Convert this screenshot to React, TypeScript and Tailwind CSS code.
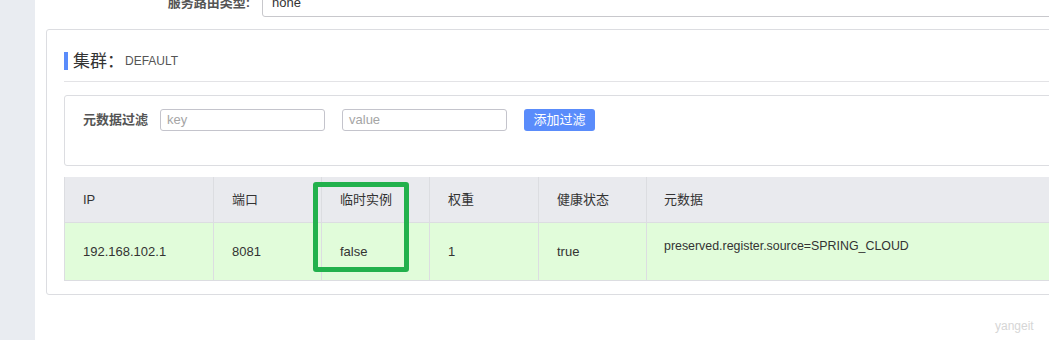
export default function App() {
  const cols = [
    { title: 'IP', value: '192.168.102.1', w: 'w-[149px]' },
    { title: '端口', value: '8081', w: 'w-[108px]' },
    { title: '临时实例', value: 'false', w: 'w-[108px]' },
    { title: '权重', value: '1', w: 'w-[109px]' },
    { title: '健康状态', value: 'true', w: 'w-[108px]' },
  ]

  return (
    <div
      className="flex h-[340px] w-[1049px] overflow-hidden bg-white text-[#333]"
      style={{ fontFamily: '"Liberation Sans", "Noto Sans CJK SC", sans-serif' }}
    >
      <div className="w-[35px] shrink-0 bg-[#e9ecf1]" />
      <div className="relative flex-1">
        {/* top form row, scrolled partly out of view */}
        <div className="h-[17px] overflow-hidden">
          <div className="-mt-[11px] flex items-center">
            <div className="w-[227px] pr-[12px] text-right text-[13px] font-bold text-[#555]">服务路由类型:</div>
            <div className="flex h-[28px] w-[900px] items-center rounded-[3px] border border-[#c8c8cc] px-[9px] text-[13px] text-[#333]">
              none
            </div>
          </div>
        </div>

        {/* cluster card */}
        <div className="ml-[11px] mt-[12px] h-[266px] w-[1030px] rounded-[3px] border border-[#dcdde1] pl-[17px] pt-[22px]">
          <div className="flex items-center">
            <div className="h-[18px] w-[4px] bg-[#5a8cfb]" />
            <span className="ml-[5px] text-[17px] leading-none text-[#333]">集群：</span>
            <span className="ml-[1px] text-[12px] text-[#555]">DEFAULT</span>
          </div>
          <div className="mt-[11px] h-px bg-[#e3e3e6]" />

          {/* filter box */}
          <div className="mt-[13px] h-[71px] rounded-[3px] border border-[#dcdde1] pl-[18px] pt-[13px]">
            <div className="flex items-center">
              <span className="text-[13px] font-bold text-[#555]">元数据过滤</span>
              <div className="ml-[12px] flex h-[22px] w-[165px] items-center rounded-[3px] border border-[#c4c4cc] px-[6px] text-[13px] text-[#a5a5a5]">
                key
              </div>
              <div className="ml-[17px] flex h-[22px] w-[165px] items-center rounded-[3px] border border-[#c4c4cc] px-[6px] text-[13px] text-[#a5a5a5]">
                value
              </div>
              <button className="ml-[17px] flex h-[22px] w-[71px] items-center justify-center rounded-[3px] bg-[#5a8cfb] text-[13px] text-white">
                添加过滤
              </button>
            </div>
          </div>

          {/* instance table */}
          <div className="mt-[11px] flex border-l border-[#dcdde1] text-[13px]">
            {cols.map((c) => (
              <div key={c.title} className={`${c.w} shrink-0 border-r border-[#dcdde1]`}>
                <div className="flex h-[46px] items-center border-b border-[#dcdde1] bg-[#e9eaee] pl-[18px] text-[#333]">
                  {c.title}
                </div>
                <div className="flex h-[58px] items-center border-b border-[#dcdde1] bg-[#e1fcda] pl-[18px] text-[#333]">
                  {c.value}
                </div>
              </div>
            ))}
            <div className="flex-1">
              <div className="flex h-[46px] items-center border-b border-[#dcdde1] bg-[#e9eaee] pl-[17px]">元数据</div>
              <div className="h-[58px] border-b border-[#dcdde1] bg-[#e1fcda] pl-[17px] pt-[15px] text-[12.4px] leading-[16px]">
                preserved.register.source=SPRING_CLOUD
              </div>
            </div>
          </div>
        </div>

        {/* annotation box around the 临时实例 column */}
        <div className="absolute left-[278px] top-[182px] h-[90px] w-[96px] rounded-[3px] border-[5px] border-[#22b14c]" />

        <div className="absolute left-[960px] top-[317px] text-[12px] text-[#d6d6d6]">yangeit</div>
      </div>
    </div>
  )
}
